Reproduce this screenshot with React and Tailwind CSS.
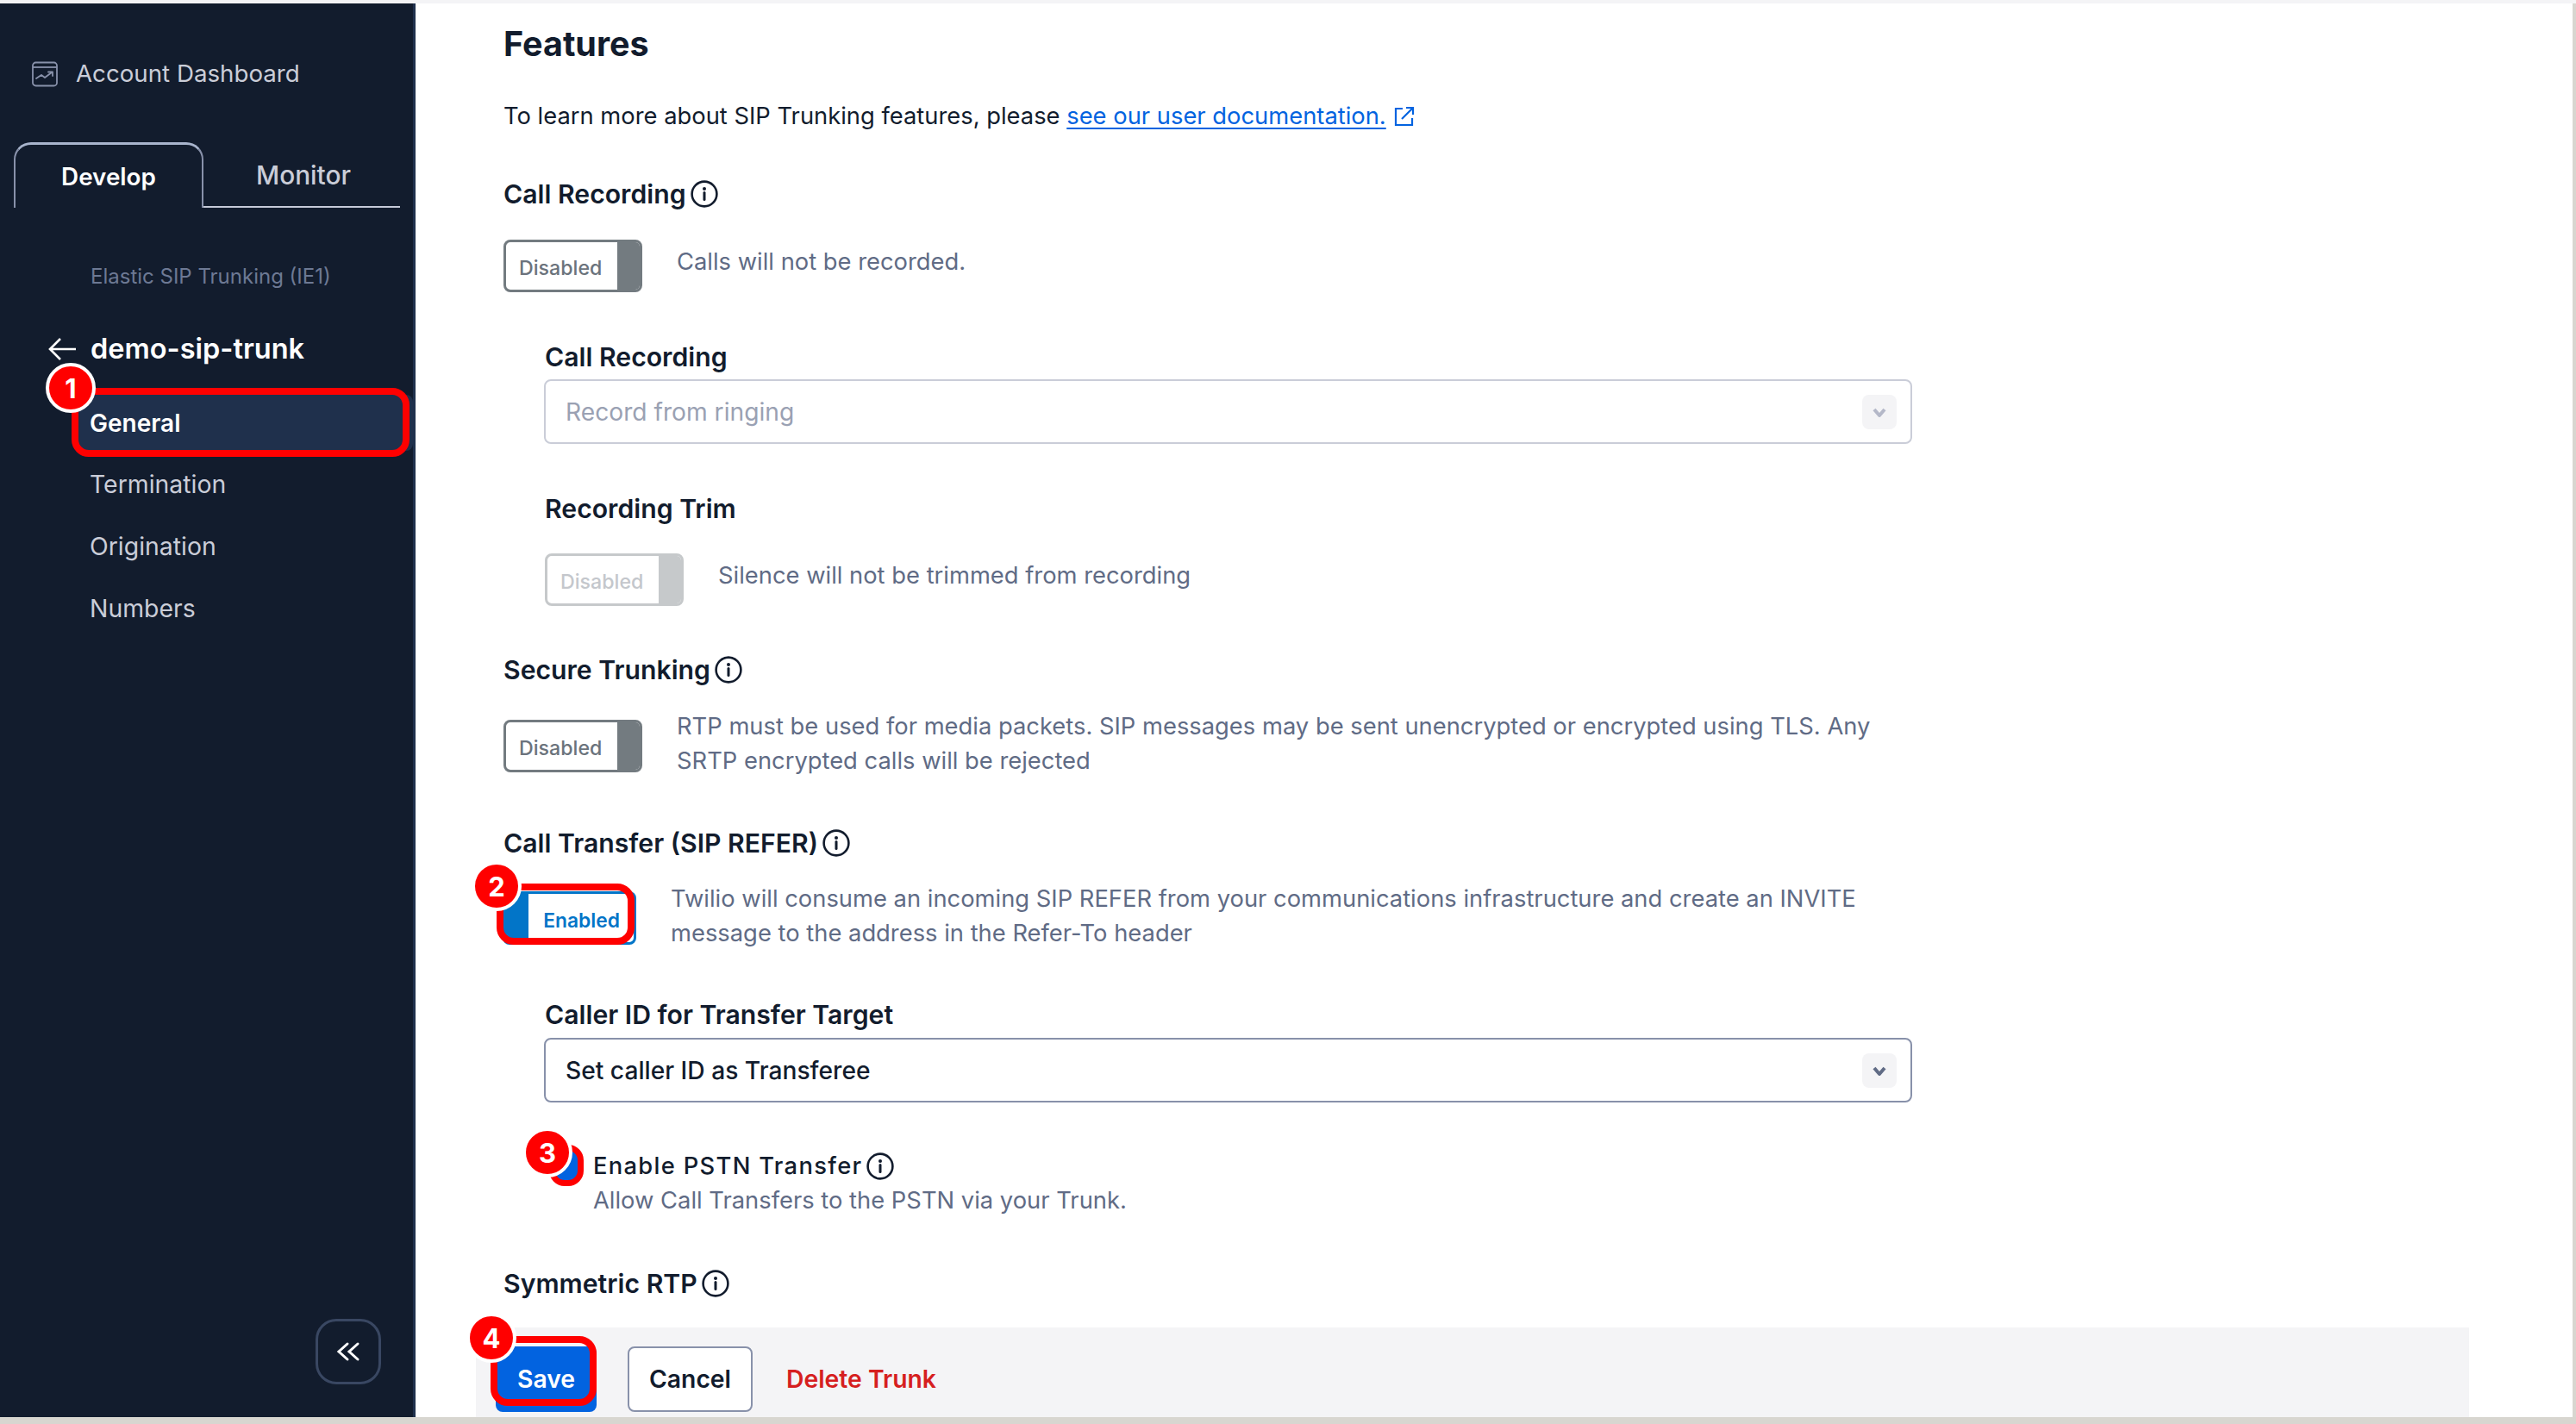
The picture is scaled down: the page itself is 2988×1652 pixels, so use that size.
import React from "react";

function InfoIcon() {
  return (
    <svg className="ml-[5px] h-[32px] w-[32px] shrink-0" viewBox="0 0 32 32" fill="none">
      <circle cx="16" cy="16" r="14.4" stroke="#121c2d" strokeWidth="2.6" />
      <circle cx="16" cy="10" r="2" fill="#121c2d" />
      <path d="M16 14.5v8" stroke="#121c2d" strokeWidth="3" strokeLinecap="round" />
    </svg>
  );
}

function Heading({ children, className = "" }) {
  return (
    <div className={`flex h-[40px] items-center text-[30.2px] font-semibold text-[#121c2d] ${className}`}>
      {children}
      <InfoIcon />
    </div>
  );
}

function DisabledToggle({ faded }) {
  return (
    <div
      className={`flex h-[61px] w-[161px] shrink-0 overflow-hidden rounded-[8px] border-[3px] bg-white ${
        faded ? "border-[#c6c9cb]" : "border-[#737b80]"
      }`}
    >
      <div
        className={`flex flex-1 items-center pl-[15px] pt-[4px] text-[23.2px] font-medium ${
          faded ? "text-[#c4c7cc]" : "text-[#6b737c]"
        }`}
      >
        Disabled
      </div>
      <div className={`w-[26px] ${faded ? "bg-[#c6c9cb]" : "bg-[#737b80]"}`} />
    </div>
  );
}

function SelectBox({ value, faded }) {
  return (
    <div
      className={`flex h-[75px] w-[1587px] items-center justify-between rounded-[8px] border-[2px] pl-[23px] pr-[16px] text-[28.2px] ${
        faded ? "border-[#cacdd8] text-[#9aa1b3]" : "border-[#8891aa] text-[#121c2d]"
      }`}
    >
      <span className={faded ? "" : "font-medium"}>{value}</span>
      <span className="flex h-[40px] w-[40px] items-center justify-center rounded-[8px] bg-[#f4f4f6]">
        <svg className="h-[20px] w-[20px]" viewBox="0 0 20 20" fill="none">
          <path
            d="M4 7l6 7 6-7"
            stroke={faded ? "#b4b8c8" : "#606b85"}
            strokeWidth="4"
            strokeLinejoin="round"
          />
        </svg>
      </span>
    </div>
  );
}

function Badge({ n, className = "" }) {
  return (
    <div
      className={`absolute z-20 flex h-[58px] w-[58px] items-center justify-center rounded-full border-[4px] border-white bg-[#ff0000] text-[31px] font-bold leading-none text-white ${className}`}
    >
      {n}
    </div>
  );
}

function NavItem({ children }) {
  return <div className="flex h-[72px] items-center pl-[104px] text-[28.4px] text-[#cacdd8]">{children}</div>;
}

function Sidebar() {
  return (
    <aside className="flex h-full w-[482px] shrink-0 flex-col border-r-[3px] border-[#1f304c] bg-[#121c2d]">
      <div className="mt-[62px] flex h-[40px] items-center pl-[37px] text-[27.7px] text-[#cacdd8]">
        <svg className="mr-[21px] h-[30px] w-[30px]" viewBox="0 0 30 30" fill="none" stroke="#8891aa" strokeWidth="1.8">
          <rect x="1" y="1.5" width="28" height="27" rx="3.5" />
          <path d="M1 7h28" />
          <path d="M5 20l6-4 4 3 8-6" strokeLinecap="round" strokeLinejoin="round" />
          <path d="M19 12.5h5v4.5" strokeLinecap="round" strokeLinejoin="round" />
        </svg>
        Account Dashboard
      </div>

      <div className="mt-[59px] flex h-[76px] pl-[16px]">
        <div className="flex w-[220px] items-center justify-center rounded-t-[20px] border-x-[2px] border-t-[3px] border-[#a8b4cc] border-x-[#8891aa] pt-[2px] text-[27.8px] font-semibold text-white">
          Develop
        </div>
        <div className="flex w-[228px] items-center justify-center border-b-[2px] border-[#c5cad8] pl-[4px] pt-[2px] text-[29.8px] font-medium text-[#cacdd8]">
          Monitor
        </div>
      </div>

      <div className="mt-[60px] flex h-[40px] items-center pl-[105px] text-[24px] text-[#6d7994]">
        Elastic SIP Trunking (IE1)
      </div>

      <div className="mt-[44px] flex h-[40px] items-center pl-[56px] text-[32.5px] font-semibold text-white">
        <svg className="mr-[17px] h-[26px] w-[32px]" viewBox="0 0 32 26" fill="none" stroke="white" strokeWidth="2.6">
          <path d="M32 13H2M14 1L2 13l12 12" />
        </svg>
        demo-sip-trunk
      </div>

      <div className="relative ml-[90px] mt-[33px] flex h-[65px] items-center rounded-[8px] bg-[#1f304c] pl-[14px] text-[28px] font-semibold text-white">
        General
        <div className="absolute -bottom-[7px] -left-[7px] -top-[8px] right-[4px] rounded-[20px] border-[8px] border-[#ff0000]" />
        <Badge n="1" className="-left-[37px] -top-[37px]" />
      </div>

      <div className="mt-[3px]">
        <NavItem>Termination</NavItem>
        <NavItem>Origination</NavItem>
        <NavItem>Numbers</NavItem>
      </div>

      <div className="mb-[38px] mr-[37px] mt-auto flex h-[76px] w-[76px] items-center justify-center self-end rounded-[24px] border-[3px] border-[#394762]">
        <svg className="h-[24px] w-[28px]" viewBox="0 0 28 24" fill="none" stroke="white" strokeWidth="3" strokeLinecap="round">
          <path d="M13 3L3 12l10 9M25 3l-10 9 10 9" />
        </svg>
      </div>
    </aside>
  );
}

function Features() {
  return (
    <div className="min-h-0 flex-1 overflow-hidden pl-[102px] text-[27.35px] leading-[40px]">
      <h2 className="mt-[23px] h-[48px] text-[39.5px] font-bold leading-[48px] text-[#121c2d]">Features</h2>

      <p className="mt-[40px] flex h-[40px] items-center text-[#121c2d]">
        <span className="whitespace-pre">To learn more about SIP Trunking features, please </span>
        <a className="text-[#0263e0] underline decoration-2 underline-offset-[4px]">see our user documentation.</a>
        <svg className="ml-[9px] h-[24px] w-[24px]" viewBox="0 0 24 24" fill="none" stroke="#0263e0" strokeWidth="2.2">
          <path d="M10 3H2v19h19v-8" />
          <path d="M9 15L21 3M14 2h8v8" />
        </svg>
      </p>

      <Heading className="mt-[50px]">Call Recording</Heading>
      <div className="mt-[33px] flex h-[61px] items-start">
        <DisabledToggle />
        <span className="ml-[40px] mt-[6px] text-[#606b85]">Calls will not be recorded.</span>
      </div>

      <div className="ml-[47px]">
        <div className="ml-[1px] mt-[55px] h-[40px] text-[30.2px] font-semibold text-[#121c2d]">Call Recording</div>
        <div className="mt-[6px]">
          <SelectBox value="Record from ringing" faded />
        </div>
        <div className="ml-[1px] mt-[55px] h-[40px] text-[30.2px] font-semibold text-[#121c2d]">Recording Trim</div>
        <div className="ml-[1px] mt-[32px] flex h-[61px] items-center">
          <DisabledToggle faded />
          <span className="mb-[10px] ml-[40px] text-[#606b85]">Silence will not be trimmed from recording</span>
        </div>
      </div>

      <Heading className="mt-[54px]">Secure Trunking</Heading>
      <div className="mt-[25px] flex h-[80px] items-start">
        <div className="mt-[13px]">
          <DisabledToggle />
        </div>
        <p className="ml-[40px] mt-[1px] w-[1440px] text-[#606b85]">
          RTP must be used for media packets. SIP messages may be sent unencrypted or encrypted using TLS. Any SRTP
          encrypted calls will be rejected
        </p>
      </div>

      <Heading className="mt-[56px]">Call Transfer (SIP REFER)</Heading>
      <div className="mt-[24px] flex h-[80px] items-start">
        <div className="relative ml-[-1px] mt-[12px] flex h-[62px] w-[155px] shrink-0 overflow-hidden rounded-[8px] border-[3px] border-[#0275c8] bg-white">
          <div className="w-[27px] bg-[#0275c8]" />
          <div className="flex flex-1 items-center justify-end pr-[16px] pt-[6px] text-[22.8px] font-semibold text-[#0275c8]">
            Enabled
          </div>
        </div>
        <div className="relative -ml-[155px] mt-[3px] h-[71px] w-[160px] shrink-0 -translate-x-[7px] rounded-[20px] border-[8px] border-[#ff0000]">
          <Badge n="2" className="-left-[37px] -top-[34px]" />
        </div>
        <p className="ml-[35px] mt-[1px] w-[1440px] text-[#606b85]">
          Twilio will consume an incoming SIP REFER from your communications infrastructure and create an INVITE message
          to the address in the Refer-To header
        </p>
      </div>

      <div className="ml-[47px]">
        <div className="ml-[1px] mt-[55px] h-[40px] text-[30.2px] font-semibold text-[#121c2d]">
          Caller ID for Transfer Target
        </div>
        <div className="mt-[7px]">
          <SelectBox value="Set caller ID as Transferee" />
        </div>
      </div>

      <div className="ml-[53px] mt-[54px] flex">
        <div className="relative mt-[-5px] h-[48px] w-[40px] shrink-0 rounded-[18px] border-[7px] border-[#ff0000] bg-[#0263e0]">
          <Badge n="3" className="-left-[38px] -top-[27px]" />
        </div>
        <div className="ml-[11px]">
          <div className="flex h-[40px] items-center font-medium tracking-[1.3px] text-[#121c2d]">
            Enable PSTN Transfer
            <InfoIcon />
          </div>
          <div className="h-[40px] text-[#606b85]">Allow Call Transfers to the PSTN via your Trunk.</div>
        </div>
      </div>

      <Heading className="mt-[56px]">Symmetric RTP</Heading>
    </div>
  );
}

function Footer() {
  return (
    <div className="ml-[70px] flex h-[104px] w-[2312px] shrink-0 items-start bg-[#f4f4f6] pl-[23px] pt-[22px] text-[28.3px] font-semibold">
      <button className="relative flex h-[76px] w-[117px] items-center justify-center rounded-[8px] bg-[#0263e0] text-white">
        Save
        <div className="absolute -left-[6px] -top-[12px] bottom-[7px] right-0 rounded-[20px] border-[8px] border-[#ff0000]" />
        <Badge n="4" className="-left-[34px] -top-[39px]" />
      </button>
      <button className="ml-[36px] flex h-[76px] w-[145px] items-center justify-center rounded-[8px] border-[2px] border-[#8891aa] bg-white text-[#121c2d]">
        Cancel
      </button>
      <div className="ml-[39px] flex h-[76px] items-center text-[#d61f1f]">Delete Trunk</div>
    </div>
  );
}

export default function App() {
  return (
    <div className="flex h-[1652px] w-full flex-col overflow-hidden bg-white font-['Inter',sans-serif]">
      <div className="h-[4px] shrink-0 bg-[#f4f4f6]" />
      <div className="flex min-h-0 flex-1">
        <Sidebar />
        <main className="flex min-w-0 flex-1 flex-col">
          <Features />
          <Footer />
        </main>
        <div className="w-[4px] shrink-0 bg-[#d8d6d0]" />
      </div>
      <div className="h-[8px] shrink-0 bg-[#d8d6d0]" />
    </div>
  );
}
